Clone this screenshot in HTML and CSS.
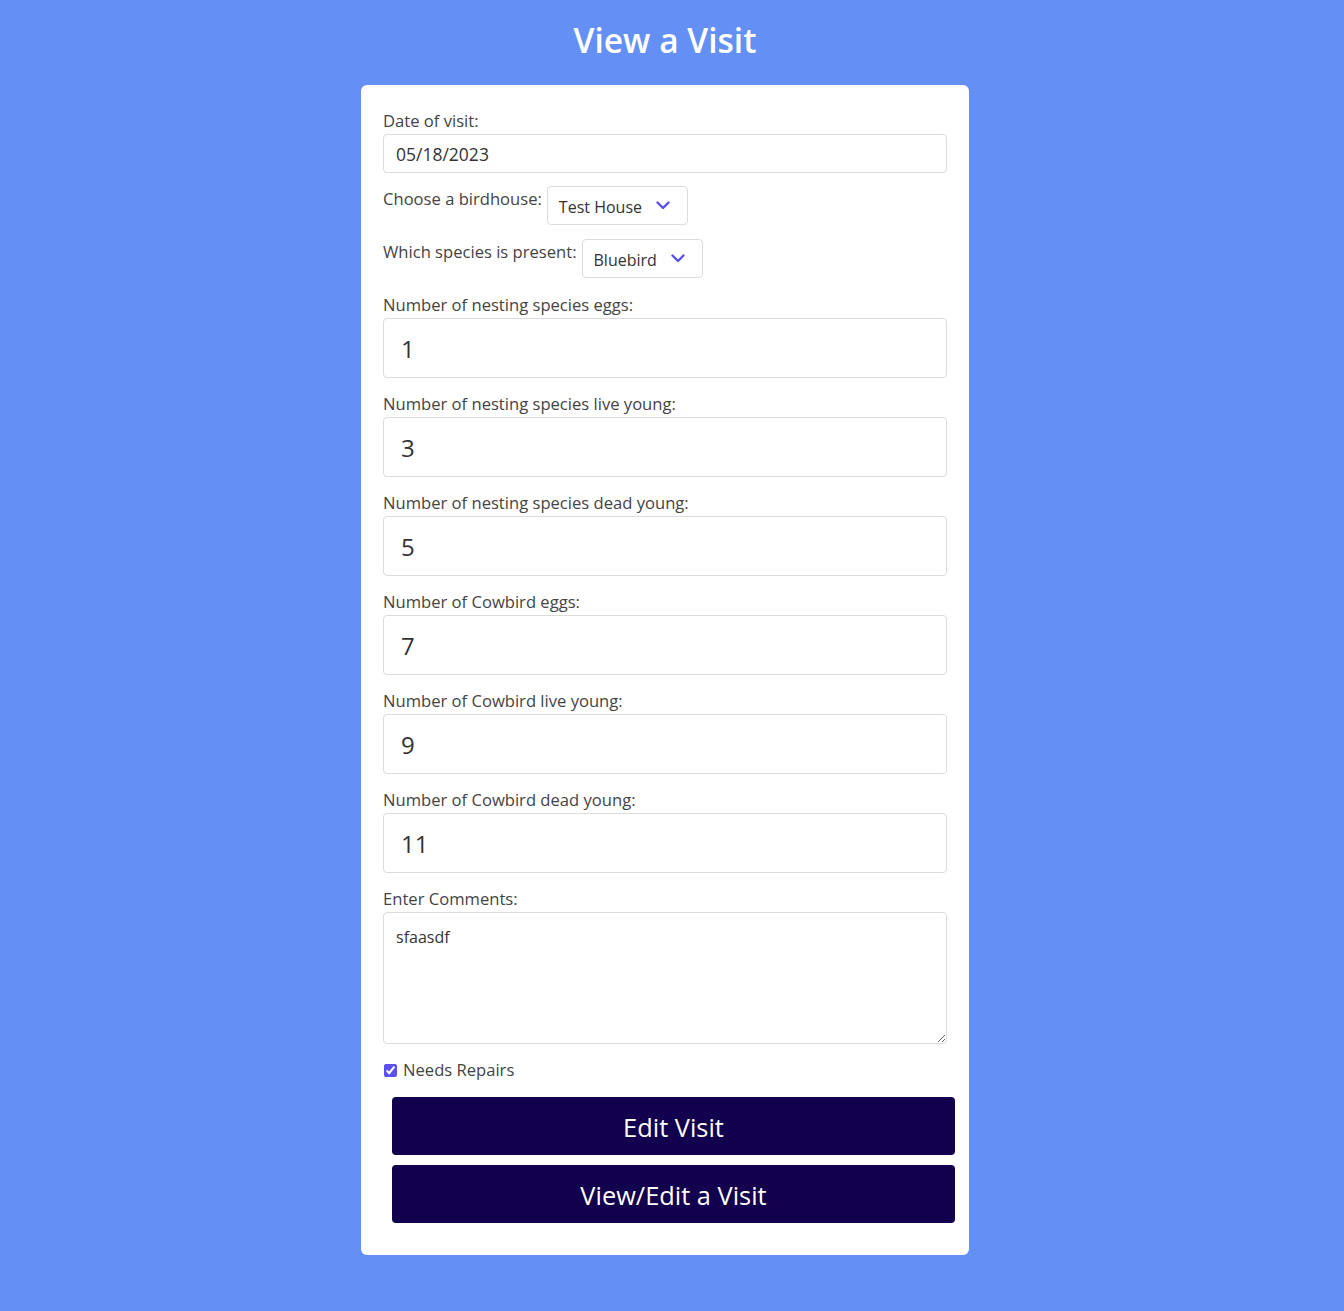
FILE: index.html
```html
<!DOCTYPE html>
<html lang="en">
<head>
<meta charset="utf-8">
<title>View a Visit</title>
<link rel="stylesheet" href="styles.css">
</head>
<body>
<main class="page">
  <h1 class="title">View a Visit</h1>
  <form class="card">
    <label class="label" for="date">Date of visit:</label>
    <input class="input input-date" id="date" type="text" value="05/18/2023">

    <div class="row">
      <span class="row-label">Choose a birdhouse:</span>
      <div class="select">
        <span>Test House</span>
        <svg class="chev" width="14" height="9" viewBox="0 0 14 9"><path d="M1.5 1.5 L7 7 L12.5 1.5" fill="none" stroke="#5b50f0" stroke-width="2.4" stroke-linecap="round" stroke-linejoin="round"/></svg>
      </div>
    </div>

    <div class="row">
      <span class="row-label">Which species is present:</span>
      <div class="select">
        <span>Bluebird</span>
        <svg class="chev" width="14" height="9" viewBox="0 0 14 9"><path d="M1.5 1.5 L7 7 L12.5 1.5" fill="none" stroke="#5b50f0" stroke-width="2.4" stroke-linecap="round" stroke-linejoin="round"/></svg>
      </div>
    </div>

    <div class="group group-first">
      <label class="label">Number of nesting species eggs:</label>
      <input class="input input-num" type="text" value="1">
    </div>
    <div class="group">
      <label class="label">Number of nesting species live young:</label>
      <input class="input input-num" type="text" value="3">
    </div>
    <div class="group">
      <label class="label">Number of nesting species dead young:</label>
      <input class="input input-num" type="text" value="5">
    </div>
    <div class="group">
      <label class="label">Number of Cowbird eggs:</label>
      <input class="input input-num" type="text" value="7">
    </div>
    <div class="group">
      <label class="label">Number of Cowbird live young:</label>
      <input class="input input-num" type="text" value="9">
    </div>
    <div class="group">
      <label class="label">Number of Cowbird dead young:</label>
      <input class="input input-num" type="text" value="11">
    </div>
    <div class="group">
      <label class="label">Enter Comments:</label>
      <textarea class="input textarea">sfaasdf</textarea>
    </div>

    <label class="check">
      <input type="checkbox" checked>
      <span>Needs Repairs</span>
    </label>

    <button type="button" class="btn btn-first">Edit Visit</button>
    <button type="button" class="btn">View/Edit a Visit</button>
  </form>
</main>
</body>
</html>
```

FILE: styles.css
```css
* { box-sizing: border-box; }

html, body {
  margin: 0;
  padding: 0;
  background: #648ff5;
}

body {
  font-family: "Open Sans", "Noto Sans", sans-serif;
  color: #444;
}

.page {
  display: flex;
  flex-direction: column;
  align-items: center;
  padding: 0 14px 56px 0;
}

.title {
  margin: 20px 0 25px;
  line-height: 40px;
  font-size: 33.5px;
  font-weight: 600;
  color: #fff;
}

.card {
  width: 608px;
  background: #fff;
  border-radius: 6px;
  padding: 24px 22px 32px;
  display: flex;
  flex-direction: column;
}

.label {
  display: block;
  font-size: 16.6px;
  line-height: 24px;
  color: #444;
}

.input {
  display: block;
  width: 100%;
  border: 1px solid #dcdcdc;
  border-radius: 4px;
  background: #fff;
  font-family: inherit;
  color: #333;
  outline: none;
}

.input-date {
  margin-top: 1px;
  height: 39px;
  padding: 0 12px;
  font-size: 17.5px;
}

.row {
  display: flex;
  align-items: flex-start;
  gap: 5px;
  margin-top: 13px;
}

.row + .row {
  margin-top: 14px;
}

.row-label {
  font-size: 16.6px;
  line-height: 24px;
  padding-top: 1px;
}

.select {
  display: flex;
  align-items: center;
  height: 39px;
  padding: 2px 17px 0 11px;
  border: 1px solid #dcdcdc;
  border-radius: 4px;
  font-size: 16px;
  color: #333;
}

.chev {
  margin-left: 14px;
  margin-top: -2px;
}

.group {
  margin-top: 14px;
}

.group-first {
  margin-top: 15px;
}

.input-num {
  margin-top: 1px;
  height: 60px;
  padding: 0 17px;
  font-size: 24px;
}

.textarea {
  margin-top: 1px;
  height: 132px;
  padding: 13px 12px;
  font-size: 16px;
  line-height: 23px;
  resize: vertical;
}

.check {
  display: flex;
  align-items: center;
  gap: 6px;
  margin-top: 14px;
  font-size: 16.6px;
  line-height: 24px;
  color: #444;
}

.check input {
  margin: 0 0 0 1px;
  width: 13px;
  height: 13px;
  accent-color: #5b50f0;
}

.btn {
  display: block;
  width: calc(100% - 1px);
  margin: 15px 0 0 9px;
  height: 58px;
  padding-top: 2px;
  border: none;
  border-radius: 4px;
  background: #12004e;
  color: #fff;
  font-family: inherit;
  font-size: 25.4px;
}

.btn + .btn {
  margin-top: 10px;
}
```
